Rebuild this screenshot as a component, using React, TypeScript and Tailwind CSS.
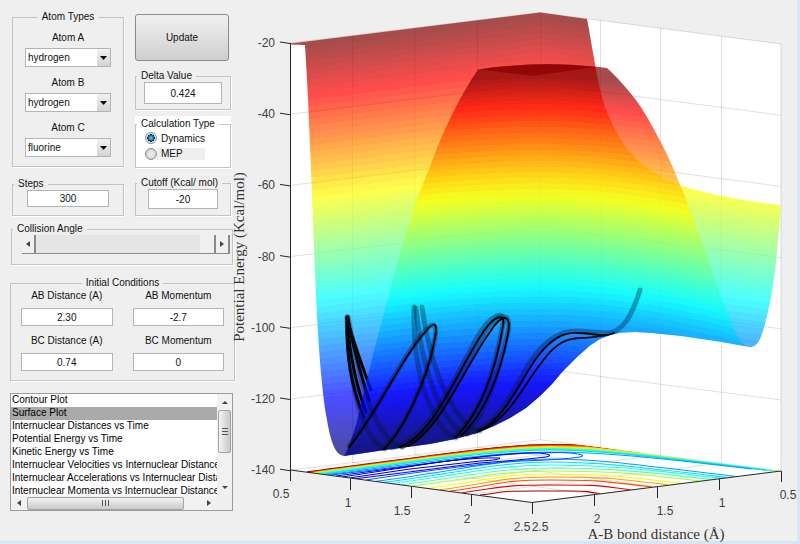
import { useState } from "react";
import type { ReactNode } from "react";
import clsx from "clsx";

const ATOMS = ["hydrogen", "fluorine", "chlorine", "deuterium"];

const PLOTS = [
  "Contour Plot",
  "Surface Plot",
  "Internuclear Distances vs Time",
  "Potential Energy vs Time",
  "Kinetic Energy vs Time",
  "Internuclear Velocities vs Internuclear Distance",
  "Internuclear Accelerations vs Internuclear Distance",
  "Internuclear Momenta vs Internuclear Distance",
];

function Panel({ title, center, className, bodyClassName, children }: {
  title: string;
  center?: boolean;
  className?: string;
  bodyClassName?: string;
  children: ReactNode;
}) {
  return (
    <fieldset className={clsx("min-w-0 border border-[#c3c3c6] shadow-[1px_1px_0_#fff]", className)}>
      <legend className={clsx("whitespace-nowrap px-1 leading-3", center ? "mx-auto" : "ml-px")}>{title}</legend>
      <div className={bodyClassName}>{children}</div>
    </fieldset>
  );
}

function AtomSelect({ id, label, initial }: { id: string; label: string; initial: string }) {
  const [value, setValue] = useState(initial);
  return (
    <div className="flex flex-col gap-1">
      <label htmlFor={id} className="text-center leading-3">{label}</label>
      <div className="relative">
        <select
          id={id}
          value={value}
          onChange={(e) => setValue(e.target.value)}
          className="block h-[19px] w-full appearance-none border border-[#b4b4b9] bg-white pl-[2px] pr-4"
        >
          {ATOMS.map((a) => <option key={a}>{a}</option>)}
        </select>
        <span className="pointer-events-none absolute inset-y-px right-px flex w-[13px] items-center justify-center bg-linear-to-b from-[#f2f2f2] to-[#d4d4d4]">
          <svg viewBox="0 0 7 4" className="h-1 w-[7px]"><path d="M0 0h7L3.5 4z" fill="#000" /></svg>
        </span>
      </div>
    </div>
  );
}

function NumberField({ label, initial, className, hideLabel }: {
  label: string;
  initial: string;
  className?: string;
  hideLabel?: boolean;
}) {
  const [value, setValue] = useState(initial);
  const input = (
    <input
      value={value}
      aria-label={label}
      onChange={(e) => setValue(e.target.value)}
      className={clsx("block w-full border border-[#b4b4bb] bg-white text-center", className)}
    />
  );
  if (hideLabel) return input;
  return (
    <label className="flex flex-col gap-[6px] text-center leading-3">
      {label}
      {input}
    </label>
  );
}

function Arrow({ dir }: { dir: "left" | "right" | "up" | "down" }) {
  const paths = {
    left: "M5 0v6L1 3z",
    right: "M1 0v6l4-3z",
    up: "M0 5h6L3 2z",
    down: "M0 1h6L3 4z",
  };
  return <svg viewBox="0 0 6 6" className="size-[6px]"><path d={paths[dir]} fill="#444" /></svg>;
}

function CollisionSlider() {
  const [angle, setAngle] = useState(180);
  const btn = "flex w-[14px] items-center justify-center border-r-2 border-b border-[#8b8b8b] bg-[#f0f0f0]";
  return (
    <div className="flex h-[19px]">
      <button aria-label="Decrease angle" className={btn} onClick={() => setAngle(angle - 1)}>
        <Arrow dir="left" />
      </button>
      <input
        type="range"
        aria-label="Collision Angle"
        min={0}
        max={180}
        value={angle}
        onChange={(e) => setAngle(Number(e.target.value))}
        className="m-0 h-full min-w-0 flex-1 appearance-none border-b border-[#8b8b8b] bg-[#e5e5e5] [&::-webkit-slider-thumb]:h-[18px] [&::-webkit-slider-thumb]:w-4 [&::-webkit-slider-thumb]:appearance-none [&::-webkit-slider-thumb]:border-r-2 [&::-webkit-slider-thumb]:border-[#8b8b8b] [&::-webkit-slider-thumb]:bg-[#f0f0f0]"
      />
      <button aria-label="Increase angle" className={btn} onClick={() => setAngle(angle + 1)}>
        <Arrow dir="right" />
      </button>
    </div>
  );
}

function PlotList() {
  const [selected, setSelected] = useState("Surface Plot");
  return (
    <div className="flex h-[118px] border border-[#9a9ca3] bg-white">
      <div className="flex min-w-0 flex-1 flex-col">
        <select
          size={8}
          aria-label="Plot type"
          value={selected}
          onChange={(e) => setSelected(e.target.value)}
          className="block min-h-0 w-full flex-1 overflow-hidden [scrollbar-width:none]"
        >
          {PLOTS.map((p) => (
            <option
              key={p}
              className="h-[13px] min-h-0 p-0 pl-px leading-[13px] text-black checked:bg-[#aaaaaa] checked:bg-linear-to-b checked:from-[#aaaaaa] checked:to-[#aaaaaa]"
            >
              {p}
            </option>
          ))}
        </select>
        <div className="flex h-[14px] items-center bg-[#f1f1f1]">
          <span className="flex w-4 justify-center"><Arrow dir="left" /></span>
          <span className="flex h-[13px] w-[157px] items-center justify-center gap-px rounded-xs border border-[#a3a3a3] bg-linear-to-b from-[#f3f3f3] to-[#c9c9c9]">
            <i className="h-[6px] w-px bg-[#555]" />
            <i className="ml-px h-[6px] w-px bg-[#555]" />
            <i className="ml-px h-[6px] w-px bg-[#555]" />
          </span>
          <span className="flex flex-1 justify-center pl-4"><Arrow dir="right" /></span>
        </div>
      </div>
      <div className="flex w-[15px] flex-col">
        <div className="flex flex-1 flex-col items-center bg-[#f1f1f1]">
          <span className="flex h-4 items-center"><Arrow dir="up" /></span>
          <span className="flex h-[43px] w-[13px] flex-col items-center justify-center gap-px rounded-xs border border-[#a3a3a3] bg-linear-to-r from-[#f3f3f3] to-[#c9c9c9]">
            <i className="h-px w-[6px] bg-[#555]" />
            <i className="mt-px h-px w-[6px] bg-[#555]" />
            <i className="mt-px h-px w-[6px] bg-[#555]" />
          </span>
          <span className="mt-auto flex h-4 items-center"><Arrow dir="down" /></span>
        </div>
        <div className="h-[14px] bg-[#efefef]" />
      </div>
    </div>
  );
}

// ---- surface plot ----

const LEVELS = 64;
const Z_MAX = -20;
const Z_MIN = -137;

function jet(t: number) {
  const c = (d: number) => Math.round(255 * Math.max(0, Math.min(1, 1.5 - Math.abs(4 * t - d))));
  return `rgb(${c(3)},${c(2)},${c(1)})`;
}

// height of an iso-energy line on the far sheet (two flat walls meeting at x = 540)
function backLine(x: number, z: number) {
  const y = 13 + (Z_MAX - z) * 3.56;
  return y + Math.abs(x - 540) * (x < 540 ? 0.122 : 0.13);
}

const FRONT: [number, number][] = [[-20, 75], [-34.6, 104], [-49, 149], [-64, 195], [-93, 290], [-122, 386], [-140, 446]];

// near sheet: curved iso lines, tabulated along x = 540
function frontLine(x: number, z: number) {
  let i = 0;
  while (i < FRONT.length - 2 && z < FRONT[i + 1][0]) i++;
  const [z0, y0] = FRONT[i];
  const [z1, y1] = FRONT[i + 1];
  const y = y0 + ((z - z0) / (z1 - z0)) * (y1 - y0);
  const d = x - 540;
  return y + d * d * (d < 0 ? 0.00045 : 0.0007);
}

function Bands({ line }: { line: (x: number, z: number) => number }) {
  const xs = Array.from({ length: 52 }, (_, i) => 280 + i * 10);
  return (
    <>
      <rect x="280" y="0" width="510" height="480" fill={jet(1)} />
      {Array.from({ length: LEVELS }, (_, i) => {
        const z = Z_MAX - ((Z_MAX - Z_MIN) * i) / LEVELS;
        const top = xs.map((x) => `${x},${line(x, z).toFixed(1)}`).join(" ");
        return (
          <polygon key={i} points={`${top} 790,480 280,480`} fill={jet(1 - i / (LEVELS - 1))} shapeRendering="crispEdges" />
        );
      })}
    </>
  );
}

// lower rim shared by both sheets, right to left
const RIM =
  "L722 342L682 336L652 333L636 332L622 332.5L612 334.5L600 339L590 345.5L577 357L563 371L552 384L540 396L526 408L510 418L494 426L477 433L455 439L430 444L385 450L344 456";
const BACK_SHEET =
  `M290 43.5L540 12.5L587 19C590 34 592 48 595 64C600 92 604 106 610 119C620 142 634 160 652 171C662 178 672 182 682 186C712 195 745 201 781 205C779 232 777 252 775 272C771 300 766 325 760 339C757 345 754 347 750 347${RIM}C334 455 330 437 327 420C320 380 317 320 315 272L311 170L308 98L305 45L290 44.5Z`;
const FRONT_SHEET =
  `M478 69.5Q540 60 607 68C622 82 640 102 652 126C662 144 672 163 680 185C690 207 700 237 712 271C720 296 730 322 740 340Q746 348 750 347${RIM}C350 446 357 424 362 400C371 362 384 312 395 272C406 232 416 198 428 172C442 132 460 96 478 69.5Z`;

// color level, left edge x, crest y, right edge x
const CONTOURS: [number, number, number, number][] = [
  [0.98, 307, 445, 610],
  [0.9, 309, 445, 620],
  [0.78, 311, 446, 640],
  [0.65, 313, 447, 690],
  [0.55, 315, 448, 778],
  [0.42, 318, 449, 772],
  [0.34, 322, 450, 766],
  [0.28, 326, 452, 752],
  [0.28, 376, 459, 736],
  [0.34, 384, 462, 728],
  [0.4, 392, 465, 722],
  [0.46, 402, 468, 712],
  [0.54, 412, 471, 700],
  [0.63, 428, 474, 682],
  [0.72, 440, 477, 669],
  [0.8, 450, 480, 652],
  [0.9, 462, 485, 631],
  [0.97, 480, 491, 600],
];

function contourPath([, xl, ya, xr]: [number, number, number, number]) {
  const xa = 550;
  const yl = 470 + (xl - 290) * 0.132;
  // far lines run parallel to the back wall, near ones end on the front edge
  const yr = ya < 455 ? 440 + (xr - 540) * 0.124 + (ya - 443) * 0.3 : 502 - (xr - 532) * 0.1245;
  const dl = (xa - xl) * 0.5;
  const dr = (xr - xa) * 0.5;
  return `M${xl} ${yl}C${xl + dl} ${yl - dl * 0.13} ${xa - 50} ${ya} ${xa} ${ya}S${xr - dr} ${yr - dr * 0.12} ${xr} ${yr}`;
}

const POCKETS: [string, string][] = [
  [jet(0.21), "M331 475L480 457Q540 451 570 453Q589 455 580 457Q560 460 520 461Q470 464 366 480"],
  [jet(0.12), "M336 476L470 458Q520 452 540 453Q556 455 546 457Q520 460 480 463L354 479"],
  [jet(0.05), "M342 477L440 462Q480 457 500 458Q500 460 480 461L410 469L349 478"],
];

const SHADOW_TRACKS = [
  "M347 317C348 350 352 385 360 412C366 430 374 444 385 449",
  "M348 317C354 350 360 380 368 400C378 428 388 442 402 447",
  "M349 446C378 412 398 362 424 332C432 322 438 322 435 338C428 380 402 432 384 448",
  "M414 307C413 350 420 385 430 405C438 424 446 436 456 438",
  "M422 307C428 350 440 386 452 404C460 418 470 430 480 431",
  "M416 308C420 350 428 380 440 405C448 420 458 432 468 434",
  "M392 448C430 440 454 378 478 336C492 312 506 310 503 324C496 362 484 412 455 436",
  "M402 447C440 432 462 370 486 330C500 311 512 312 508 332C498 376 486 412 466 434",
  "M474 432C500 424 516 385 530 362C545 340 560 330 578 331L605 333C622 334 632 316 640 290",
];

const TRACKS = [
  "M349 447C378 412 400 360 426 331C434 321 438 322 435 338C428 380 402 432 384 449",
  "M400 447C432 436 454 378 480 337C494 314 506 312 503 326C497 362 484 408 456 437",
  "M408 446C440 430 464 368 490 332C502 313 512 313 508 334C500 376 484 414 461 436",
  "M478 431C505 420 520 380 538 356C552 338 564 332 578 333C590 333 598 336 606 335",
  "M482 430C510 418 524 384 542 362C556 342 568 338 582 338C594 337 604 337 614 333",
];

const WALL_TRACKS = [
  "M347 317C346 350 350 385 364 417",
  "M348 317C352 345 360 372 369 400",
  "M347 322C350 355 356 385 366 412",
  "M347 318C354 345 362 365 371 390",
];

function SurfacePlot() {
  const zTicks = [-20, -40, -60, -80, -100, -120, -140];
  const leftTicks: [string, number, number, number][] = [
    ["0.5", 290, 470, 281], ["1", 350, 479, 348], ["1.5", 411, 487, 402], ["2", 471, 495, 467], ["2.5", 532, 503, 522],
  ];
  const rightTicks: [string, number, number, number][] = [
    ["2.5", 532, 503, 540], ["2", 594, 495, 597], ["1.5", 657, 487, 665], ["1", 719, 479, 722], ["0.5", 781, 471, 788],
  ];
  return (
    <svg viewBox="235 0 562 541" className="block w-full overflow-visible font-['Liberation_Sans',Arial,sans-serif]" role="img" aria-label="Potential energy surface">
      <defs>
        <clipPath id="back"><path d={BACK_SHEET} /></clipPath>
        <clipPath id="front"><path d={FRONT_SHEET} /></clipPath>
        <clipPath id="floor"><path d="M290 470L540 440L781 471L532 502Z" /></clipPath>
      </defs>

      <path d="M290 43L540 12.5L781 44V471L532 502L290 470Z" fill="#fff" />

      <g stroke="#262626" strokeOpacity="0.15" fill="none">
        {[0, 1, 2, 3, 4, 5, 6].map((k) => (
          <path key={k} d={`M290 ${43 + k * 71.2}L540 ${12.5 + k * 71.2}L781 ${44 + k * 71.2}`} />
        ))}
        {[352.5, 415, 477.5].map((x) => {
          const y = 43 - (x - 290) * 0.122;
          return <path key={x} d={`M${x} ${y}V${y + 427}L${x + 242} ${y + 459}`} />;
        })}
        {[600.5, 660.5, 721.5].map((x) => {
          const y = 12.5 + (x - 540) * 0.13;
          return <path key={x} d={`M${x} ${y}V${y + 427}L${x - 250} ${y + 458}`} />;
        })}
        <path d="M540.5 12.5V440M781 44V471" />
      </g>

      <g clipPath="url(#floor)" fill="none">
        {CONTOURS.map((c) => (
          <path key={`${c[1]}-${c[2]}`} d={contourPath(c)} stroke={jet(c[0])} strokeWidth={c[2] < 450 ? 1.8 : 1.1} />
        ))}
        {POCKETS.map(([color, d]) => <path key={d} d={d} stroke={color} />)}
      </g>

      <g clipPath="url(#back)" opacity="0.7"><Bands line={backLine} /></g>

      <g fill="none" stroke="#000" strokeWidth="3" strokeLinecap="round">
        {WALL_TRACKS.map((d) => <path key={d} d={d} />)}
      </g>

      <g clipPath="url(#front)" opacity="0.7">
        <Bands line={frontLine} />
        <path d="M478 69.5Q540 60 607 68L532 76Z" fill="#800000" />
      </g>
      <path d="M480 69.5Q540 60 596 67L532 76Z" fill="#8c0000" fillOpacity="0.7" />

      <g fill="none" stroke="#001428" strokeOpacity="0.34" strokeWidth="5" strokeLinecap="round">
        {SHADOW_TRACKS.map((d) => <path key={d} d={d} />)}
      </g>
      <g fill="none" stroke="#000" strokeWidth="1.8" strokeLinecap="round">
        {TRACKS.map((d) => <path key={d} d={d} />)}
      </g>

      <g stroke="#262626" fill="none">
        <path d="M290.5 43V470L532 502.5L781 471" />
        {zTicks.map((z, i) => <path key={z} d={`M280 ${42 + i * 71.2}L290 ${43.5 + i * 71.2}`} />)}
        {[...leftTicks, ...rightTicks].map(([t, x, y, lx]) => (
          <path key={`${t}-${lx}`} d={`M${x + 0.5} ${y}v11`} />
        ))}
      </g>

      <g fill="#404040" fontSize="12">
        {zTicks.map((z, i) => (
          <text key={z} x={275} y={47 + i * 71.2} textAnchor="end">{z}</text>
        ))}
        {[...leftTicks, ...rightTicks].map(([t, , y, lx]) => (
          <text key={`${t}-${lx}`} x={lx} y={y + 28} textAnchor="middle">{t}</text>
        ))}
      </g>

      <g fill="#333" fontSize="15" className="font-['Liberation_Serif','Times_New_Roman',serif]">
        <text x="656" y="539" textAnchor="middle">A-B bond distance (Å)</text>
        <text transform="translate(244 257) rotate(-90)" textAnchor="middle">Potential Energy (Kcal/mol)</text>
      </g>
    </svg>
  );
}

export default function App() {
  const [mode, setMode] = useState("Dynamics");
  const radio =
    "m-0 size-3 appearance-none rounded-full border border-[#8e8f8f] bg-[radial-gradient(circle,#e8e8e8_30%,#bbb_100%)] checked:bg-[radial-gradient(circle,#6fd0f5_0,#1c5f8f_38%,#0d3050_50%,#e4e4e4_55%)]";

  return (
    <main className="flex min-h-screen items-start border-r-[3px] border-b-[3px] border-[#d9e5f2] bg-[#efefef] font-['Liberation_Sans',Arial,sans-serif] text-[10px] text-[#111]">
      <aside className="flex w-[235px] shrink-0 flex-col pt-[11px]">
        <div className="flex gap-[11px] pl-3">
          <div className="flex w-[112px] flex-col gap-[11px]">
            <Panel title="Atom Types" center className="h-[156px]" bodyClassName="flex flex-col gap-[10px] px-3 pt-[9px]">
              <AtomSelect id="atom-a" label="Atom A" initial="hydrogen" />
              <AtomSelect id="atom-b" label="Atom B" initial="hydrogen" />
              <AtomSelect id="atom-c" label="Atom C" initial="fluorine" />
            </Panel>
            <Panel title="Steps" className="h-[38px]" bodyClassName="px-[14px]">
              <NumberField label="Steps" initial="300" hideLabel className="h-[17px]" />
            </Panel>
          </div>

          <div className="flex w-24 flex-col pt-[3px]">
            <button className="h-[47px] w-[94px] rounded-[3px] border border-[#8a8a8a] bg-linear-to-b from-[#f1f1f1] via-[#e0e0e0] to-[#cecece]">
              Update
            </button>
            <Panel title="Delta Value" className="mt-[9px] h-10" bodyClassName="px-2">
              <NumberField label="Delta Value" initial="0.424" hideLabel className="h-[22px]" />
            </Panel>
            <div className="mt-[6px] bg-white pt-[2px]">
              <Panel title="Calculation Type" className="h-[50px]" bodyClassName="pl-[9px]">
                <label className="flex h-4 items-center gap-1">
                  <input type="radio" name="calc" className={radio} checked={mode === "Dynamics"} onChange={() => setMode("Dynamics")} />
                  Dynamics
                </label>
                <label className="flex h-4 items-center">
                  <input type="radio" name="calc" className={radio} checked={mode === "MEP"} onChange={() => setMode("MEP")} />
                  <span className="w-12 bg-[#efefef] pl-1 leading-3">MEP</span>
                </label>
              </Panel>
            </div>
            <Panel title="Cutoff (Kcal/ mol)" className="mt-[9px] h-[39px]" bodyClassName="px-3">
              <NumberField label="Cutoff (Kcal/ mol)" initial="-20" hideLabel className="h-5" />
            </Panel>
          </div>
        </div>

        <Panel title="Collision Angle" className="mr-[2px] mt-[7px] ml-[11px] h-[42px]" bodyClassName="pl-[10px] pr-[2px]">
          <CollisionSlider />
        </Panel>

        <Panel title="Initial Conditions" center className="mt-3 ml-[10px] h-[104px]" bodyClassName="px-[10px]">
          <div className="grid grid-cols-2 gap-x-5 gap-y-[9px] pt-px">
            <NumberField label="AB Distance (A)" initial="2.30" className="h-[18px]" />
            <NumberField label="AB Momentum" initial="-2.7" className="h-[18px]" />
            <NumberField label="BC Distance (A)" initial="0.74" className="h-[18px]" />
            <NumberField label="BC Momentum" initial="0" className="h-[18px]" />
          </div>
        </Panel>

        <div className="mt-3 mr-[2px] ml-[10px]">
          <PlotList />
        </div>
      </aside>

      <section className="min-w-0 flex-1">
        <SurfacePlot />
      </section>
    </main>
  );
}
